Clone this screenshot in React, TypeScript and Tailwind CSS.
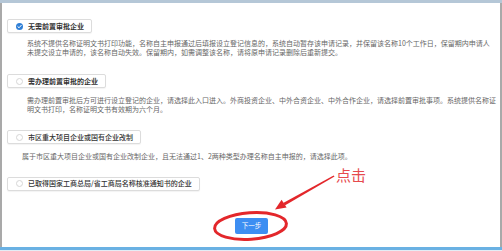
import React from 'react';

const FONT = { fontFamily: '"Noto Sans CJK SC", "Noto Sans", "Liberation Sans", sans-serif' };

function Radio({ checked }: { checked?: boolean }) {
  if (checked) {
    return (
      <svg width="7" height="7" viewBox="0 0 14 14" className="shrink-0">
        <circle cx="7" cy="7" r="7" fill="#2f7fd6" />
        <path d="M3.6 7.2 L6.1 9.6 L10.5 4.6" fill="none" stroke="#fff" strokeWidth="2" strokeLinecap="round" strokeLinejoin="round" />
      </svg>
    );
  }
  return <span className="h-[7px] w-[7px] shrink-0 rounded-full border border-[#d6d6d6] bg-white" />;
}

function Option({ label, checked, bold }: { label: string; checked?: boolean; bold?: boolean }) {
  return (
    <div className="inline-flex h-[14px] items-center self-start rounded-[2px] border border-[#dcdcdc] bg-white pl-[8px] pr-[7px] shadow-[0_1px_1px_rgba(0,0,0,0.05)]">
      <Radio checked={checked} />
      <span className={`ml-[5px] whitespace-nowrap text-[7px] leading-none text-[#333] ${bold ? 'font-bold' : 'font-medium'}`}>
        {label}
      </span>
    </div>
  );
}

function Desc({ lines, indent = 'pl-[20px]', className = '' }: { lines: string[]; indent?: string; className?: string }) {
  return (
    <div className={`${indent} ${className} text-[7px] leading-[8.5px] text-[#666]`}>
      {lines.map((l) => (
        <div key={l} className="whitespace-nowrap">{l}</div>
      ))}
    </div>
  );
}

export default function App() {
  return (
    <div className="relative flex h-[251px] w-[502px] flex-col overflow-hidden bg-white" style={FONT}>
      <div className="h-[3px] bg-[#b5c7d7]" />

      <div className="flex flex-1 flex-col border-x-2 border-[#a9a9a9] pl-[5px]">
        <div className="mt-[16px] flex">
          <Option label="无需前置审批企业" checked bold />
        </div>
        <Desc
          className="mt-[6px]"
          lines={[
            '系统不提供名称证明文书打印功能，名称自主申报通过后填报设立登记信息的，系统自动暂存该申请记录，并保留该名称10个工作日，保留期内申请人',
            '未提交设立申请的，该名称自动失效。保留期内，如需调整该名称，请将原申请记录删除后重新提交。',
          ]}
        />

        <div className="mt-[18px] flex">
          <Option label="需办理前置审批的企业" bold />
        </div>
        <Desc
          className="mt-[8px]"
          lines={[
            '需办理前置审批后方可进行设立登记的企业，请选择此入口进入。外商投资企业、中外合资企业、中外合作企业，请选择前置审批事项。系统提供名称证',
            '明文书打印，名称证明文书有效期为六个月。',
          ]}
        />

        <div className="mt-[17px] flex">
          <Option label="市区重大项目企业或国有企业改制" />
        </div>
        <Desc
          className="mt-[8px]"
          indent="pl-[15px]"
          lines={['属于市区重大项目企业或国有企业改制企业，且无法通过1、2两种类型办理名称自主申报的，请选择此项。']}
        />

        <div className="mt-[16px] flex">
          <Option label="已取得国家工商总局/省工商局名称核准通知书的企业" />
        </div>

        <button className="mt-[27px] ml-[228px] flex h-[16px] w-[33px] items-center justify-center self-start rounded-[2px] bg-[#3d8ef2] text-[6.5px] leading-none text-white">
          下一步
        </button>
      </div>

      <div className="h-[3px] bg-[#6ab1e3]" />
      <div className="h-[1px] bg-[#e3edf5]" />

      {/* red annotation drawn over the page */}
      <svg className="pointer-events-none absolute left-0 top-0" width="502" height="251" viewBox="0 0 502 251">
        <ellipse cx="250.5" cy="226" rx="36" ry="13.2" fill="none" stroke="#e3272b" strokeWidth="3" transform="rotate(-4 250.5 226)" />
        <polygon points="334.5,176.6 333.6,175.4 283.2,203 284.8,205.6" fill="#e3272b" />
        <polygon points="275,209.5 281.6,199.8 286.6,207.4" fill="#e3272b" />
      </svg>
      <span className="pointer-events-none absolute left-[336px] top-[167px] text-[15px] leading-none text-[#e64a4e]">点击</span>
    </div>
  );
}
